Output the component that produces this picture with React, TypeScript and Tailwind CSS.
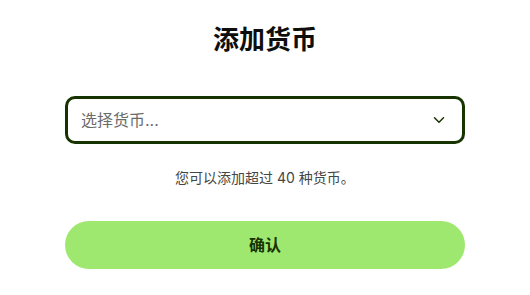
import { ChevronDown } from "lucide-react"

export default function App() {
  return (
    <div
      className="w-[530px] h-[295px] bg-white flex flex-col items-center"
      style={{ fontFamily: "Inter, 'Noto Sans CJK SC', sans-serif" }}
    >
      <h1 className="mt-[22px] text-[26px] leading-[36px] font-bold text-[#0e0f0c]">添加货币</h1>

      <button className="mt-[38px] w-[400px] h-[48px] border-[3px] border-[#163300] rounded-[10px] flex items-center justify-between pl-[13px] pr-[14px]">
        <span className="text-[16px] text-[#6a6c6a]">选择货币...</span>
        <ChevronDown className="w-[18px] h-[18px] text-[#163300]" strokeWidth={2} />
      </button>

      <p className="mt-[24px] text-[14px] leading-[20px] text-[#454745]">您可以添加超过 40 种货币。</p>

      <button className="mt-[33px] w-[400px] h-[48px] rounded-full bg-[#9fe870] text-[#163300] text-[16px] font-bold">
        确认
      </button>
    </div>
  )
}
